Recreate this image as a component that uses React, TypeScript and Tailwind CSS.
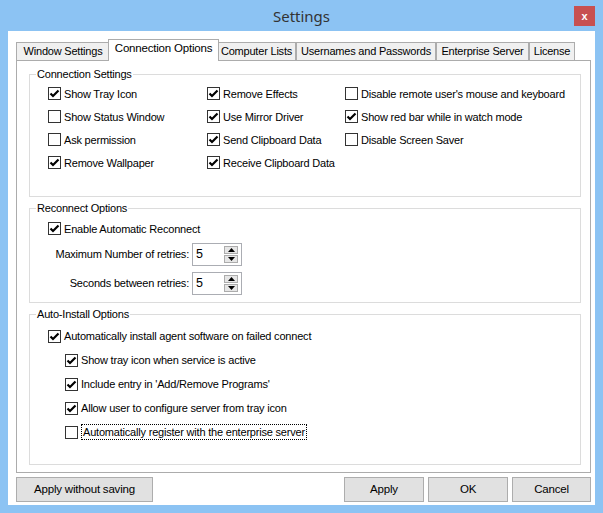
import React from "react"

const font = { fontFamily: '"Liberation Sans", Arial, sans-serif' }

function CheckBox({ checked }: { checked?: boolean }) {
  return (
    <span className="w-[13px] h-[13px] shrink-0 border border-[#333333] bg-white flex items-center justify-center">
      {checked && (
        <svg width="11" height="11" viewBox="0 0 11 11">
          <path d="M1.5 5.5 L4 8 L9.5 2.5" stroke="#000" strokeWidth="2.2" fill="none" />
        </svg>
      )}
    </span>
  )
}

function Check({ label, checked, focus }: { label: string; checked?: boolean; focus?: boolean }) {
  return (
    <div className="flex items-center gap-[3px] h-[23px] whitespace-nowrap">
      <CheckBox checked={checked} />
      <span className={focus ? "border border-dotted border-black px-[1px] leading-[14px]" : "leading-[14px]"}>{label}</span>
    </div>
  )
}

function Spinner({ value }: { value: string }) {
  return (
    <div className="w-[50px] h-[23px] border border-[#abadb3] bg-white flex items-center pl-[3px] pr-[3px] text-[12.5px]">
      <span className="flex-1">{value}</span>
      <div className="flex flex-col gap-[1px]">
        <span className="w-[14px] h-[8px] bg-[#e6e6e6] border border-[#acacac] flex items-center justify-center">
          <svg width="7" height="4" viewBox="0 0 7 4">
            <path d="M0 4 L3.5 0 L7 4 Z" fill="#000" />
          </svg>
        </span>
        <span className="w-[14px] h-[8px] bg-[#e6e6e6] border border-[#acacac] flex items-center justify-center">
          <svg width="7" height="4" viewBox="0 0 7 4">
            <path d="M0 0 L3.5 4 L7 0 Z" fill="#000" />
          </svg>
        </span>
      </div>
    </div>
  )
}

function Group({ title, className, children }: { title: string; className: string; children: React.ReactNode }) {
  return (
    <fieldset className={"border border-[#dcdcdc] ml-[12px] mr-[9px] " + className}>
      <legend className="ml-[6px] px-[1px] leading-[14px]">{title}</legend>
      {children}
    </fieldset>
  )
}

const tabs = ["Window Settings", "Connection Options", "Computer Lists", "Usernames and Passwords", "Enterprise Server", "License"]
const tabWidths = ["w-[94px]", "w-[111px]", "w-[79px]", "w-[140px]", "w-[93px]", "w-[46px]"]

export default function App() {
  return (
    <div className="w-[603px] h-[513px] bg-[#8cc3f3] flex flex-col px-[8px] text-[11px] tracking-[-0.2px] text-black" style={font}>
      <div className="relative h-[31px] flex items-center justify-center">
        <span className="text-[15px] tracking-normal text-[#333] pt-[1px]" style={{ fontFamily: '"Noto Sans", "Open Sans", sans-serif' }}>
          Settings
        </span>
        <div className="absolute right-0 top-[6px] w-[21px] h-[20px] bg-[#c75050] flex items-center justify-center">
          <span className="text-white text-[11px] font-bold leading-none">x</span>
        </div>
      </div>

      <div className="h-[474px] bg-white flex flex-col pt-[8px] pl-[8px]">
        <div className="flex items-end h-[21px]">
          {tabs.map((t, i) =>
            i === 1 ? (
              <div
                key={t}
                className={"relative z-10 mx-[-2px] mb-[-1px] h-[22px] bg-white border border-b-0 border-[#acacac] flex items-center justify-center whitespace-nowrap text-[11.5px] pb-[3px] " + tabWidths[i]}
              >
                {t}
              </div>
            ) : (
              <div
                key={t}
                className={"h-[18px] bg-[#f0f0f0] border border-b-0 border-[#acacac] flex items-center justify-center whitespace-nowrap " + tabWidths[i]}
              >
                {t}
              </div>
            ),
          )}
        </div>

        <div className="w-[575px] h-[413px] border border-[#acacac] bg-white flex flex-col">
          <Group title="Connection Settings" className="mt-[6px] h-[130px]">
            <div className="grid grid-cols-[159px_138px_1fr] pl-[18px] pt-[1px]">
              <Check label="Show Tray Icon" checked />
              <Check label="Remove Effects" checked />
              <Check label="Disable remote user's mouse and keyboard" />
              <Check label="Show Status Window" />
              <Check label="Use Mirror Driver" checked />
              <Check label="Show red bar while in watch mode" checked />
              <Check label="Ask permission" />
              <Check label="Send Clipboard Data" checked />
              <Check label="Disable Screen Saver" />
              <Check label="Remove Wallpaper" checked />
              <Check label="Receive Clipboard Data" checked />
            </div>
          </Group>

          <Group title="Reconnect Options" className="mt-[4px] h-[102px]">
            <div className="pl-[18px] pt-[2px]">
              <Check label="Enable Automatic Reconnect" checked />
            </div>
            <div className="flex items-center mt-[3px]">
              <span className="w-[162px] text-right pr-[3px]">Maximum Number of retries:</span>
              <Spinner value="5" />
            </div>
            <div className="flex items-center mt-[6px]">
              <span className="w-[162px] text-right pr-[3px]">Seconds between retries:</span>
              <Spinner value="5" />
            </div>
          </Group>

          <Group title="Auto-Install Options" className="mt-[4px] h-[158px]">
            <div className="pl-[18px] pt-[3px]">
              <div className="h-[24px] flex items-center">
                <Check label="Automatically install agent software on failed connect" checked />
              </div>
            </div>
            <div className="pl-[35px] flex flex-col">
              <div className="h-[24px] flex items-center">
                <Check label="Show tray icon when service is active" checked />
              </div>
              <div className="h-[24px] flex items-center">
                <Check label="Include entry in 'Add/Remove Programs'" checked />
              </div>
              <div className="h-[24px] flex items-center">
                <Check label="Allow user to configure server from tray icon" checked />
              </div>
              <div className="h-[24px] flex items-center">
                <Check label="Automatically register with the enterprise server" focus />
              </div>
            </div>
          </Group>
        </div>

        <div className="w-[575px] flex items-center mt-[4px] h-[25px]">
          <button className="w-[137px] h-[25px] bg-[#e1e1e1] border border-[#adadad] text-[11.5px]">Apply without saving</button>
          <div className="flex-1" />
          <div className="flex gap-[4px]">
            <button className="w-[80px] h-[25px] bg-[#e1e1e1] border border-[#adadad] text-[11.5px]">Apply</button>
            <button className="w-[80px] h-[25px] bg-[#e1e1e1] border border-[#adadad] text-[11.5px]">OK</button>
            <button className="w-[79px] h-[25px] bg-[#e1e1e1] border border-[#adadad] text-[11.5px]">Cancel</button>
          </div>
        </div>
      </div>
    </div>
  )
}
